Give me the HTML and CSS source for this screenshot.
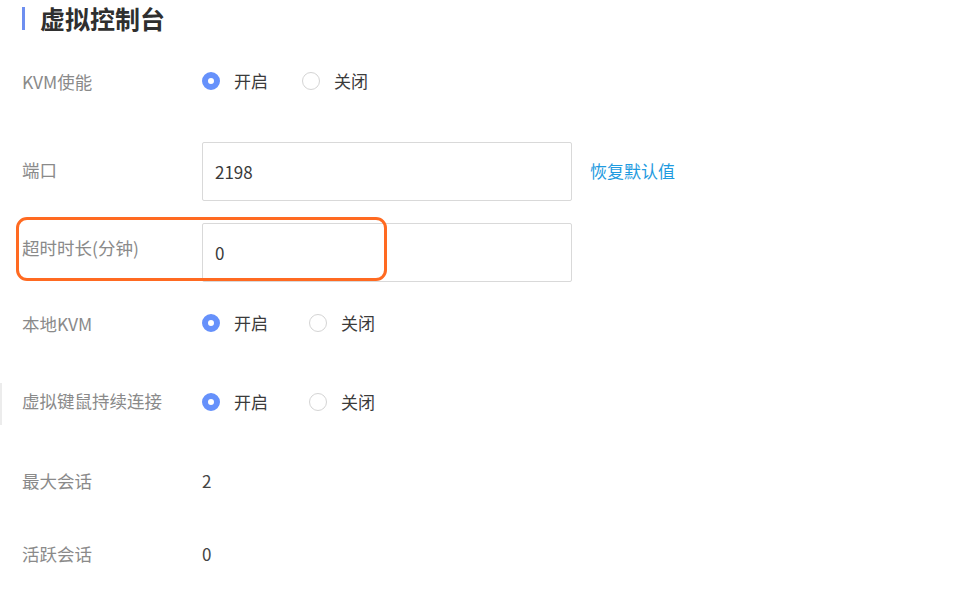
FILE: index.html
```html
<!DOCTYPE html>
<html lang="zh-CN">
<head>
<meta charset="utf-8">
<title>虚拟控制台</title>
<link rel="stylesheet" href="styles.css">
</head>
<body>
<div class="page">
  <div class="edge-mark"></div>
  <h1 class="title">虚拟控制台</h1>

  <div class="row row-kvm">
    <div class="label">KVM使能</div>
    <div class="radios">
      <label class="radio checked"><span class="dot"></span><span class="rtext">开启</span></label>
      <label class="radio gap-a"><span class="dot"></span><span class="rtext">关闭</span></label>
    </div>
  </div>

  <div class="row row-input row-port">
    <div class="label">端口</div>
    <div class="input">2198</div>
    <a class="link">恢复默认值</a>
  </div>

  <div class="row row-input row-timeout">
    <div class="highlight"></div>
    <div class="label">超时时长(分钟)</div>
    <div class="input">0</div>
  </div>

  <div class="row row-local">
    <div class="label">本地KVM</div>
    <div class="radios">
      <label class="radio checked"><span class="dot"></span><span class="rtext">开启</span></label>
      <label class="radio gap-b"><span class="dot"></span><span class="rtext">关闭</span></label>
    </div>
  </div>

  <div class="row row-persist">
    <div class="label">虚拟键鼠持续连接</div>
    <div class="radios">
      <label class="radio checked"><span class="dot"></span><span class="rtext">开启</span></label>
      <label class="radio gap-b"><span class="dot"></span><span class="rtext">关闭</span></label>
    </div>
  </div>

  <div class="row row-max">
    <div class="label">最大会话</div>
    <div class="value">2</div>
  </div>

  <div class="row row-active">
    <div class="label">活跃会话</div>
    <div class="value">0</div>
  </div>
</div>
</body>
</html>
```

FILE: styles.css
```css
html, body {
  margin: 0;
  padding: 0;
  background: #fff;
}

body {
  font-family: "Noto Sans CJK SC", "Noto Sans", sans-serif;
  font-size: 17px;
  color: #333;
}

.page {
  position: relative;
  width: 954px;
  height: 589px;
  overflow: hidden;
  padding-left: 22px;
  box-sizing: border-box;
}

.edge-mark {
  position: absolute;
  left: 0;
  top: 383px;
  width: 2px;
  height: 42px;
  background: #ececec;
}

.title {
  margin: 0;
  height: 36px;
  display: flex;
  align-items: center;
  font-size: 25px;
  font-weight: 700;
  color: #2f2f2f;
}

.title::before {
  content: "";
  display: block;
  width: 3px;
  height: 23px;
  background: #6e8ff0;
  margin-right: 15px;
}

.row {
  position: relative;
  display: flex;
  align-items: center;
  height: 40px;
}

.label {
  width: 180px;
  flex: none;
  color: #8a8a8a;
  font-size: 17.5px;
}

.row-kvm { margin-top: 25px; }
.row-port { margin-top: 40px; }
.row-timeout { margin-top: 21px; }
.row-local { margin-top: 21px; }
.row-persist { margin-top: 39px; }
.row-max { margin-top: 38px; }
.row-active { margin-top: 33px; }

.row-input {
  height: 60px;
}

.row-port .label {
  margin-top: -4px;
}

.row-timeout .label {
  margin-top: -9px;
}

.input {
  width: 370px;
  height: 59px;
  box-sizing: border-box;
  border: 1px solid #d9d9d9;
  border-radius: 2px;
  padding: 0 12px;
  display: flex;
  align-items: center;
  color: #3a3a3a;
  font-size: 17px;
  background: #fff;
}

.link {
  margin-left: 18px;
  margin-top: -2px;
  color: #1f9be0;
  font-size: 17px;
  cursor: pointer;
}

.highlight {
  position: absolute;
  left: -6px;
  top: -5px;
  width: 371px;
  height: 64px;
  box-sizing: border-box;
  border: 3px solid #ff6a21;
  border-radius: 11px;
  pointer-events: none;
  z-index: 2;
}

.radios {
  display: flex;
  align-items: center;
}

.radio {
  display: flex;
  align-items: center;
}

.gap-a { margin-left: 34px; }
.gap-b { margin-left: 41px; }

.dot {
  width: 18px;
  height: 18px;
  box-sizing: border-box;
  border-radius: 50%;
  border: 1px solid #d4d4d4;
  background: #fff;
  margin-right: 14px;
  flex: none;
}

.radio.checked .dot {
  border: 6px solid #6691fb;
  background: #fff;
}

.rtext {
  color: #3b3b3b;
  font-size: 17px;
  margin-top: -2px;
}

.row-persist .label {
  margin-top: -3px;
}

.value {
  color: #444;
  font-size: 17px;
}
```
